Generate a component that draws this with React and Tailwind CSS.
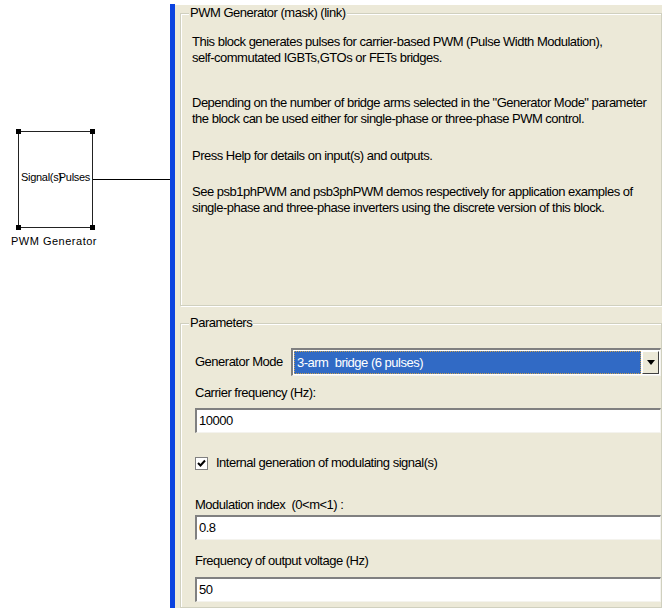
import { useState } from 'react';

const narrow = "font-['Liberation_Sans',Arial,sans-serif] tracking-[-0.5px]";

function Handle({ className }) {
  return <div className={`absolute h-[5px] w-[5px] bg-black ${className}`} />;
}

function ModelCanvas() {
  return (
    <div className="relative h-full w-[170px] shrink-0 bg-white font-['Liberation_Sans',Arial,sans-serif]">
      <div className="absolute left-[18px] top-[131px] h-[97px] w-[75px] border border-[#222]">
        <Handle className="-left-[3px] -top-[3px]" />
        <Handle className="-right-[3px] -top-[3px]" />
        <Handle className="-bottom-[3px] -left-[3px]" />
        <Handle className="-bottom-[3px] -right-[3px]" />
        <span className="absolute left-[2px] top-[40px] text-[11px] leading-none tracking-[-0.3px]">Signal(s)</span>
        <span className="absolute right-[2px] top-[40px] text-[11px] leading-none tracking-[-0.3px]">Pulses</span>
      </div>
      <div className="absolute left-[93px] top-[179px] h-px w-[77px] bg-black" />
      <div className="absolute left-[11px] top-[236px] text-[11px] leading-none tracking-[0.5px]">PWM Generator</div>
    </div>
  );
}

function Group({ title, className = '', children }) {
  return (
    <fieldset className={`border border-[#d0d0bf] shadow-[inset_1px_1px_0_#fff,1px_1px_0_#fff] ${className}`}>
      <legend className="ml-[8px] bg-[#ece9d8] px-[1px] text-[13px] leading-[16px]">{title}</legend>
      {children}
    </fieldset>
  );
}

function TextField({ value, className = '' }) {
  return (
    <div className={`flex h-[25px] items-center border-t-2 border-l-2 border-r border-b border-t-[#808080] border-l-[#808080] border-r-[#f4f3ee] border-b-[#f4f3ee] bg-white pl-[2px] text-[13px] ${className}`}>
      {value}
    </div>
  );
}

export default function App() {
  const [internal, setInternal] = useState(true);

  return (
    <div className={`flex h-[608px] w-[669px] overflow-hidden bg-white text-black ${narrow}`}>
      <ModelCanvas />
      <div className="mt-[4px] w-[5px] shrink-0 bg-[#0b43e0]" />
      <div className="mt-[5px] flex w-[487px] shrink-0 flex-col bg-[#ece9d8] pl-[5px]">
        <Group title="PWM Generator (mask) (link)" className="h-[301px]">
          <div className="whitespace-nowrap pl-[11px] pt-[13px] text-[13px] leading-[16px]">
            <p>This block generates pulses for carrier-based PWM (Pulse Width Modulation),<br />self-commutated IGBTs,GTOs or FETs bridges.</p>
            <p className="mt-[29px]">Depending on the number of bridge arms selected in the "Generator Mode" parameter<br />the block can be used either for single-phase or three-phase PWM control.</p>
            <p className="mt-[21px]">Press Help for details on input(s) and outputs.</p>
            <p className="mt-[20px]">See psb1phPWM and psb3phPWM demos respectively  for application examples of<br />single-phase and three-phase inverters using the discrete version of this block.</p>
          </div>
        </Group>

        <Group title="Parameters" className="mt-[9px] flex-1">
          <div className="pl-[14px] pt-[17px] text-[13px]">
            <div className="flex h-[28px] items-center">
              <span className="w-[96px] shrink-0 whitespace-nowrap">Generator Mode</span>
              <div className="flex h-full flex-1 items-stretch border-t-2 border-l-2 border-r border-b border-t-[#808080] border-l-[#808080] border-r-[#f4f3ee] border-b-[#f4f3ee] bg-white p-px">
                <div className="flex flex-1 items-center whitespace-pre border border-dotted border-[#c8a050] bg-[#316ac5] pl-[2px] text-white">
                  3-arm  bridge (6 pulses)
                </div>
                <div className="ml-px flex w-[17px] items-center justify-center border border-t-white border-l-white border-r-[#404040] border-b-[#404040] bg-[#ece9d8]">
                  <svg width="8" height="5" viewBox="0 0 8 5"><path d="M0 0h8L4 5z" fill="#000" /></svg>
                </div>
              </div>
            </div>

            <div className="mt-[8px] leading-[18px]">Carrier frequency (Hz):</div>
            <TextField value="10000" className="mt-[6px]" />

            <label className="mt-[21px] flex items-center leading-[18px]">
              <input
                type="checkbox"
                checked={internal}
                onChange={(e) => setInternal(e.target.checked)}
                className="sr-only"
              />
              <span className="flex h-[13px] w-[13px] items-center justify-center border border-[#808080] bg-white">
                {internal && (
                  <svg width="9" height="9" viewBox="0 0 9 9"><path d="M1 4l2.5 2.5L8 1.5" stroke="#000" strokeWidth="2" fill="none" /></svg>
                )}
              </span>
              <span className="ml-[8px]">Internal generation of modulating signal(s)</span>
            </label>

            <div className="mt-[24px] whitespace-pre leading-[18px]">Modulation index  (0&lt;m&lt;1) :</div>
            <TextField value="0.8" className="mt-[1px]" />

            <div className="mt-[12px] leading-[18px]">Frequency of output voltage (Hz)</div>
            <TextField value="50" className="mt-[7px]" />
          </div>
        </Group>
      </div>
    </div>
  );
}
